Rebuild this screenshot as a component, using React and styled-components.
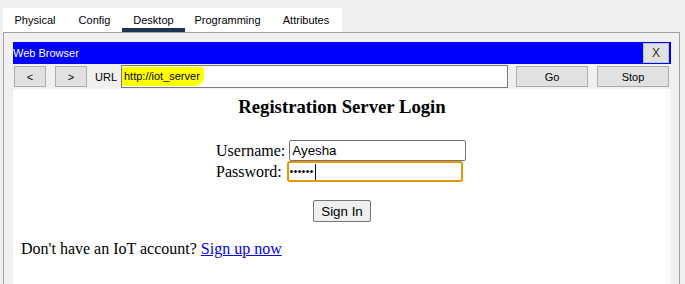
import styled, { createGlobalStyle } from 'styled-components';

const Global = createGlobalStyle`
  html, body {
    margin: 0;
    padding: 0;
    background: #f0f0f0;
    width: 685px;
    height: 284px;
    overflow: hidden;
  }
  * {
    box-sizing: border-box;
  }
`;

const TabStrip = styled.div`
  display: flex;
  margin: 8px 0 0 3px;
  width: 339px;
  height: 24px;
  background: #fff;
  font-family: 'Liberation Sans', Arial, sans-serif;
  font-size: 11px;
  color: #000;
`;

const Tab = styled.div`
  width: ${(p) => p.$w}px;
  display: flex;
  align-items: center;
  justify-content: center;
  height: 24px;
  padding-top: 4px;
  border-bottom: 4px solid ${(p) => (p.$active ? '#1c3251' : 'transparent')};
`;

const Panel = styled.div`
  margin-left: 3px;
  width: 677px;
  height: 252px;
  border: 1px solid #a0a0a0;
  border-bottom: none;
  padding: 9px 8px 0 9px;
  background: #f0f0f0;
`;

const Browser = styled.div`
  width: 658px;
  display: flex;
  flex-direction: column;
  font-family: 'Liberation Sans', Arial, sans-serif;
  font-size: 11px;
`;

const TitleBar = styled.div`
  height: 22px;
  background: #0000ff;
  color: #fff;
  display: flex;
  align-items: center;
  justify-content: space-between;
  padding-right: 2px;
`;

const CloseButton = styled.div`
  width: 26px;
  height: 20px;
  background: #e1e1e1;
  border: 1px solid #b8c2d8;
  color: #333;
  font-size: 12px;
  display: flex;
  align-items: center;
  justify-content: center;
`;

const Toolbar = styled.div`
  height: 25px;
  display: flex;
  align-items: center;
  padding: 0 2px 0 1px;
  background: #f0f0f0;
`;

const ToolButton = styled.div`
  width: ${(p) => p.$w}px;
  height: 21px;
  margin-left: ${(p) => p.$ml || 0}px;
  background: #e1e1e1;
  border: 1px solid #adadad;
  display: flex;
  align-items: center;
  justify-content: center;
  color: #000;
`;

const UrlLabel = styled.span`
  margin-left: 8px;
  width: 26px;
  color: #000;
`;

const UrlField = styled.div`
  width: 387px;
  height: 23px;
  background: #fff;
  border: 1px solid #7a7a7a;
  display: flex;
  align-items: center;
`;

const Highlight = styled.span`
  background: #ffff00;
  padding: 3px 4px 4px 2px;
  border-radius: 2px 3px 9px 3px;
  color: #000;
`;

const Content = styled.div`
  height: 196px;
  background: linear-gradient(to right, #fff 652px, #fafafa 652px);
  padding-top: 7px;
  font-family: 'Liberation Serif', 'Times New Roman', serif;
  font-size: 16px;
  color: #000;
  display: flex;
  flex-direction: column;
`;

const Heading = styled.h3`
  margin: 0;
  font-size: 18.72px;
  line-height: 22px;
  font-weight: bold;
  text-align: center;
`;

const Form = styled.div`
  width: 250px;
  margin: 22px 0 0 203px;
  display: flex;
  flex-direction: column;
`;

const FieldRow = styled.div`
  display: flex;
  align-items: center;
  height: 21px;
`;

const FieldLabel = styled.span`
  margin-right: ${(p) => p.$gap}px;
`;

const InputBox = styled.div`
  width: ${(p) => p.$w}px;
  height: 21px;
  border: ${(p) => (p.$focused ? '2px solid #e59700' : '1px solid #767676')};
  border-radius: ${(p) => (p.$focused ? '3px' : '2px')};
  display: flex;
  align-items: center;
  padding-left: ${(p) => (p.$focused ? '1px' : '2px')};
  font-family: 'Liberation Sans', Arial, sans-serif;
  font-size: 13.33px;
  color: #000;
`;

const Dots = styled.span`
  font-size: 10px;
  letter-spacing: 0.5px;
`;

const Caret = styled.span`
  width: 1px;
  height: 16px;
  background: #000;
  margin-left: 1px;
`;

const SignIn = styled.div`
  align-self: center;
  margin-top: 18px;
  width: 58px;
  height: 22px;
  background: #efefef;
  border: 1px solid #767676;
  border-radius: 2px;
  font-family: 'Liberation Sans', Arial, sans-serif;
  font-size: 13.33px;
  display: flex;
  align-items: center;
  justify-content: center;
`;

const Note = styled.p`
  margin: 18px 0 0 8px;
  line-height: 18px;
  a {
    color: #0000ee;
    text-decoration: underline;
  }
`;

const tabs = [
  { label: 'Physical', w: 64 },
  { label: 'Config', w: 55 },
  { label: 'Desktop', w: 63 },
  { label: 'Programming', w: 85 },
  { label: 'Attributes', w: 72 },
];

const App = () => {
  return (
    <>
      <Global />
      <TabStrip>
        {tabs.map((t) => (
          <Tab key={t.label} $w={t.w} $active={t.label === 'Desktop'}>
            {t.label}
          </Tab>
        ))}
      </TabStrip>
      <Panel>
        <Browser>
          <TitleBar>
            <span>Web Browser</span>
            <CloseButton>X</CloseButton>
          </TitleBar>
          <Toolbar>
            <ToolButton $w={32}>&lt;</ToolButton>
            <ToolButton $w={32} $ml={9}>&gt;</ToolButton>
            <UrlLabel>URL</UrlLabel>
            <UrlField>
              <Highlight>http://iot_server</Highlight>
            </UrlField>
            <ToolButton $w={72} $ml={8}>Go</ToolButton>
            <ToolButton $w={72} $ml={9}>Stop</ToolButton>
          </Toolbar>
          <Content>
            <Heading>Registration Server Login</Heading>
            <Form>
              <FieldRow>
                <FieldLabel $gap={4}>Username:</FieldLabel>
                <InputBox $w={177}>Ayesha</InputBox>
              </FieldRow>
              <FieldRow>
                <FieldLabel $gap={5}>Password:</FieldLabel>
                <InputBox $w={176} $focused>
                  <Dots>••••••</Dots>
                  <Caret />
                </InputBox>
              </FieldRow>
            </Form>
            <SignIn>Sign In</SignIn>
            <Note>
              Don't have an IoT account? <a href="#signup">Sign up now</a>
            </Note>
          </Content>
        </Browser>
      </Panel>
    </>
  );
};

export default App;
